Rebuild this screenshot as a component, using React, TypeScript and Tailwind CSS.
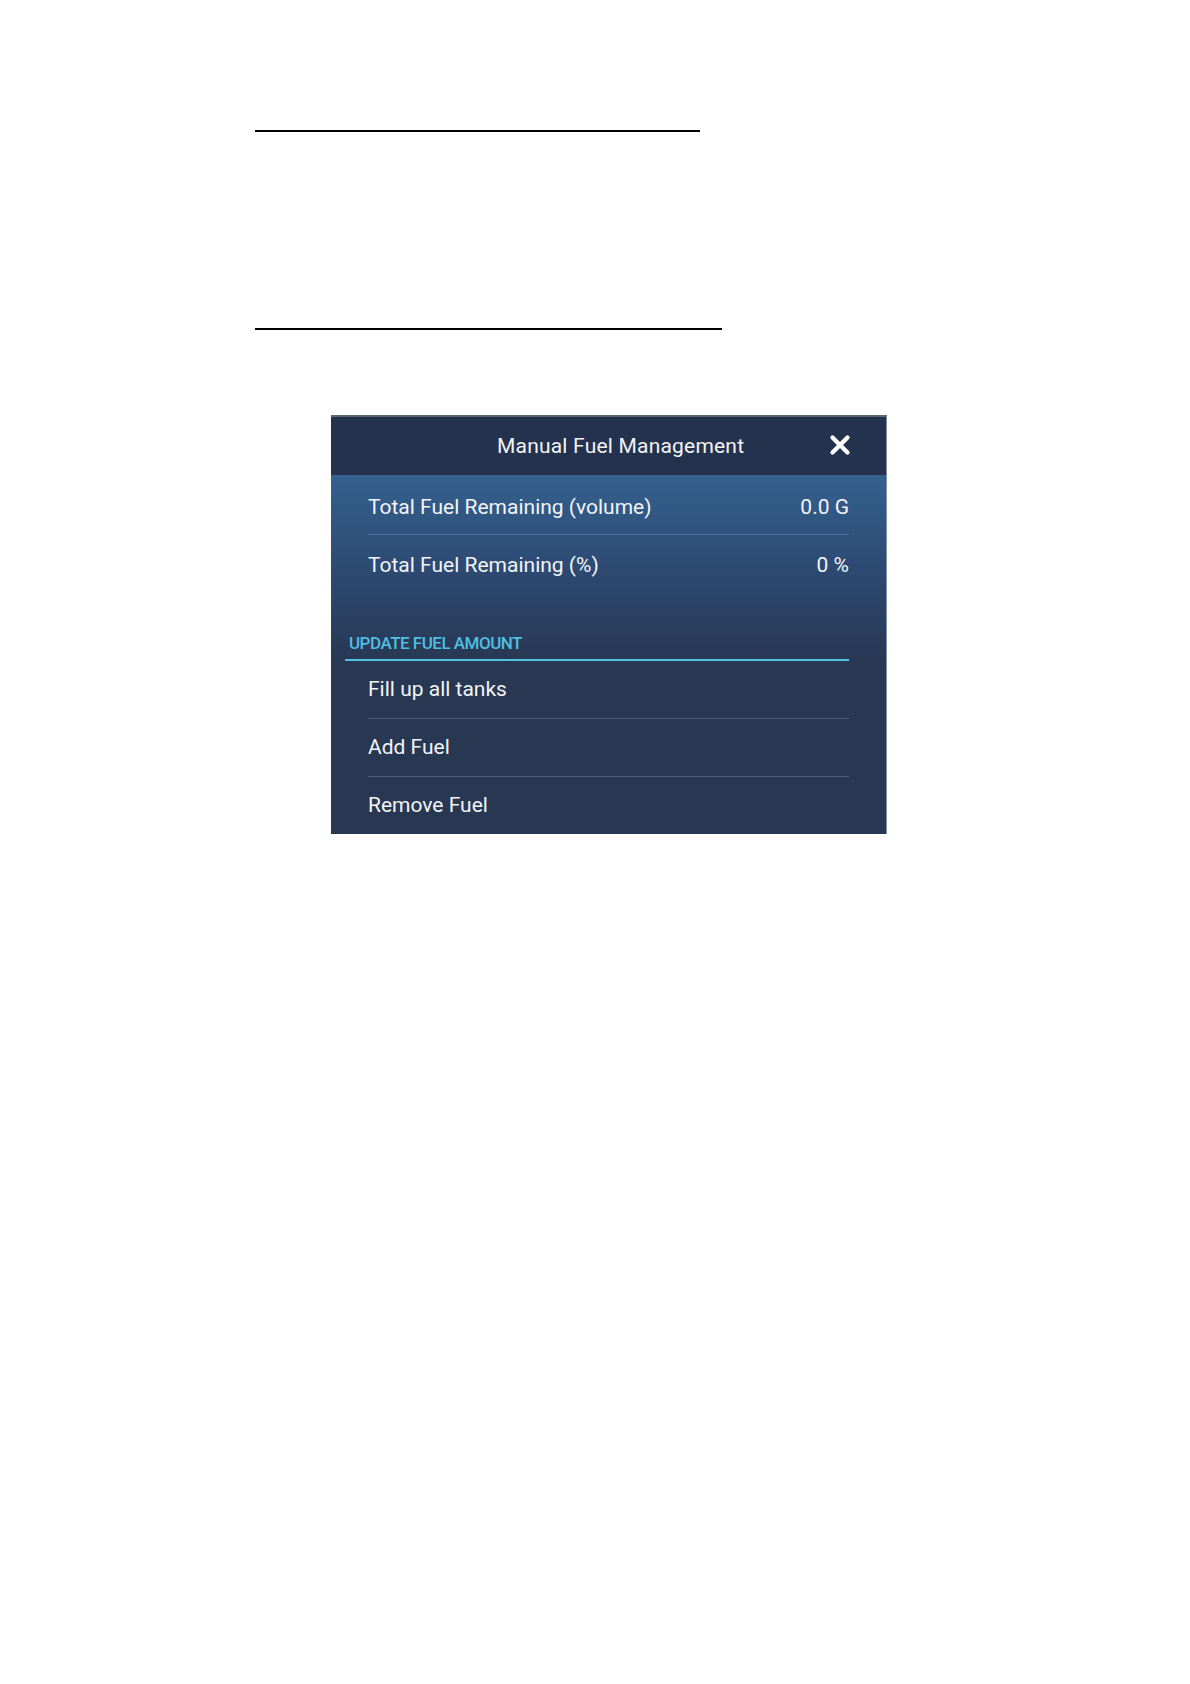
import { X } from 'lucide-react';

const stats = [
  { label: 'Total Fuel Remaining (volume)', value: '0.0 G' },
  { label: 'Total Fuel Remaining (%)', value: '0 %' },
];

const actions = ['Fill up all tanks', 'Add Fuel', 'Remove Fuel'];

function FuelPanel() {
  return (
    <div
      className="w-[556px] ml-[331px] mt-[85px] border-t-2 border-[#5f6670] border-r border-r-[#7f8fa5] text-[#f2f4f7]"
      style={{ fontFamily: 'Roboto, "Noto Sans", sans-serif' }}
    >
      <div className="h-[58px] flex items-center bg-[#25324d] pl-[166px] pr-[31px]">
        <span className="text-[21px] leading-none tracking-[0.2px] flex-1">Manual Fuel Management</span>
        <X className="w-[30px] h-[30px] text-white -mt-[2px]" strokeWidth={3.4} />
      </div>

      <div className="bg-gradient-to-b from-[#34618f] via-[#2d4a73] to-[#283853]">
        {stats.map((s, i) => (
          <div
            key={s.label}
            className={`h-[60px] mx-[37px] flex items-center justify-between text-[21px] leading-none ${
              i === 0 ? 'border-b border-[#4571a0] pt-[6px]' : ''
            }`}
          >
            <span>{s.label}</span>
            <span>{s.value}</span>
          </div>
        ))}

        <div className="ml-[14px] mr-[37px] pt-[40px] border-b-2 border-[#4ec3e6]">
          <span className="block pl-[4px] pb-[7px] text-[17px] leading-none font-medium tracking-[-0.5px] text-[#4fbfe3]">
            UPDATE FUEL AMOUNT
          </span>
        </div>
      </div>

      <div className="bg-[#283752]">
        {actions.map((a, i) => (
          <div
            key={a}
            className={`mx-[37px] flex items-center text-[21px] leading-none ${
              i < actions.length - 1 ? 'h-[58px] border-b border-[#4a5a78]' : 'h-[57px]'
            }`}
          >
            {a}
          </div>
        ))}
      </div>
    </div>
  );
}

export default function App() {
  return (
    <div className="min-h-screen bg-white pt-[130px]">
      <div className="ml-[255px] w-[445px] h-[2px] bg-black" />
      <div className="ml-[255px] mt-[196px] w-[467px] h-[2px] bg-black" />
      <FuelPanel />
    </div>
  );
}
